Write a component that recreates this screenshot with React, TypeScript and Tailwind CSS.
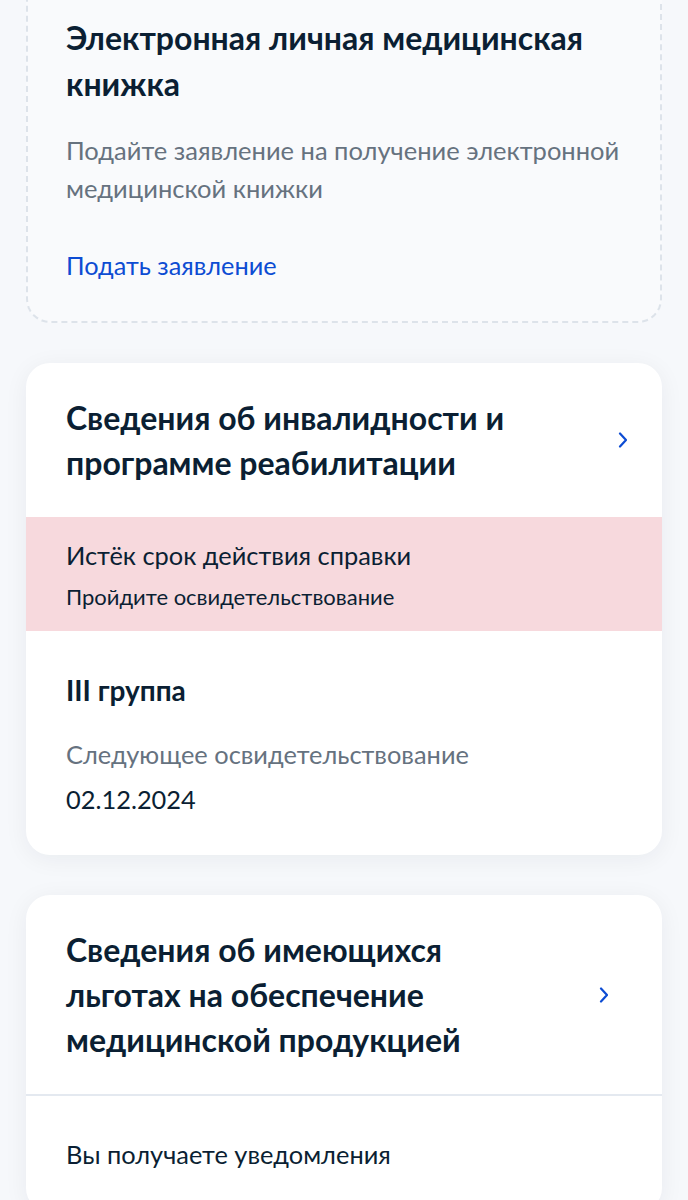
type InfoCardProps = {
  title: string
  chevronClass: string
  children?: React.ReactNode
}

function Chevron({ className }: { className: string }) {
  return (
    <svg viewBox="0 0 10 16" className={className} fill="none">
      <path d="M2 1.5 8 8l-6 6.5" stroke="#0d4cd3" strokeWidth="2.2" strokeLinecap="round" strokeLinejoin="round" />
    </svg>
  )
}

function InfoCard({ title, chevronClass, children }: InfoCardProps) {
  return (
    <section className="overflow-hidden rounded-[24px] bg-white shadow-[0_4px_24px_rgba(11,31,51,0.06)]">
      <div className="flex items-center py-8 pl-10">
        <h2 className="max-w-[450px] text-[32px] font-bold leading-[45px] text-[#0b1f33]">{title}</h2>
        <Chevron className={chevronClass} />
      </div>
      {children}
    </section>
  )
}

export default function App() {
  return (
    <div className="min-h-[1200px] bg-[#f6f8fb] px-[26px] font-['Lato','Noto_Sans',sans-serif] text-[#0b1f33]">
      <div className="-mt-[27px] flex flex-col gap-10 pb-10">
        {/* Medical book promo */}
        <section className="rounded-[24px] border-2 border-dashed border-[#dde3ea] bg-[#f9fafc] pb-[38px] pl-[38px] pr-6 pt-10">
          <h2 className="text-[32px] font-bold leading-[46px]">Электронная личная медицинская книжка</h2>
          <p className="mt-6 text-[25.5px] leading-[38px] text-[#66727f]">
            Подайте заявление на получение электронной медицинской книжки
          </p>
          <a href="#" className="mt-10 block text-[25.3px] leading-[36px] text-[#0d4cd3]">
            Подать заявление
          </a>
        </section>

        <InfoCard
          title="Сведения об инвалидности и программе реабилитации"
          chevronClass="ml-auto mr-[34px] h-4 w-[10px] shrink-0"
        >
          <div className="bg-[#f7d9dd] px-10 pb-5 pt-5">
            <p className="text-[25.4px] leading-[36px]">Истёк срок действия справки</p>
            <p className="mt-[10px] text-[22px] leading-[28px]">Пройдите освидетельствование</p>
          </div>
          <div className="px-10 pb-[38px] pt-[41px]">
            <p className="text-[28px] font-bold leading-[36px]">III группа</p>
            <p className="mt-7 text-[25.4px] leading-[36px] text-[#66727f]">Следующее освидетельствование</p>
            <p className="mt-[9px] text-[25.4px] leading-[36px]">02.12.2024</p>
          </div>
        </InfoCard>

        <InfoCard
          title="Сведения об имеющихся льготах на обеспечение медицинской продукцией"
          chevronClass="ml-auto mr-[53px] h-4 w-[10px] shrink-0"
        >
          <div className="border-t-2 border-[#e4e9f0] px-10 pb-10 pt-10">
            <p className="text-[25.4px] leading-[36px]">Вы получаете уведомления</p>
          </div>
        </InfoCard>
      </div>
    </div>
  )
}
